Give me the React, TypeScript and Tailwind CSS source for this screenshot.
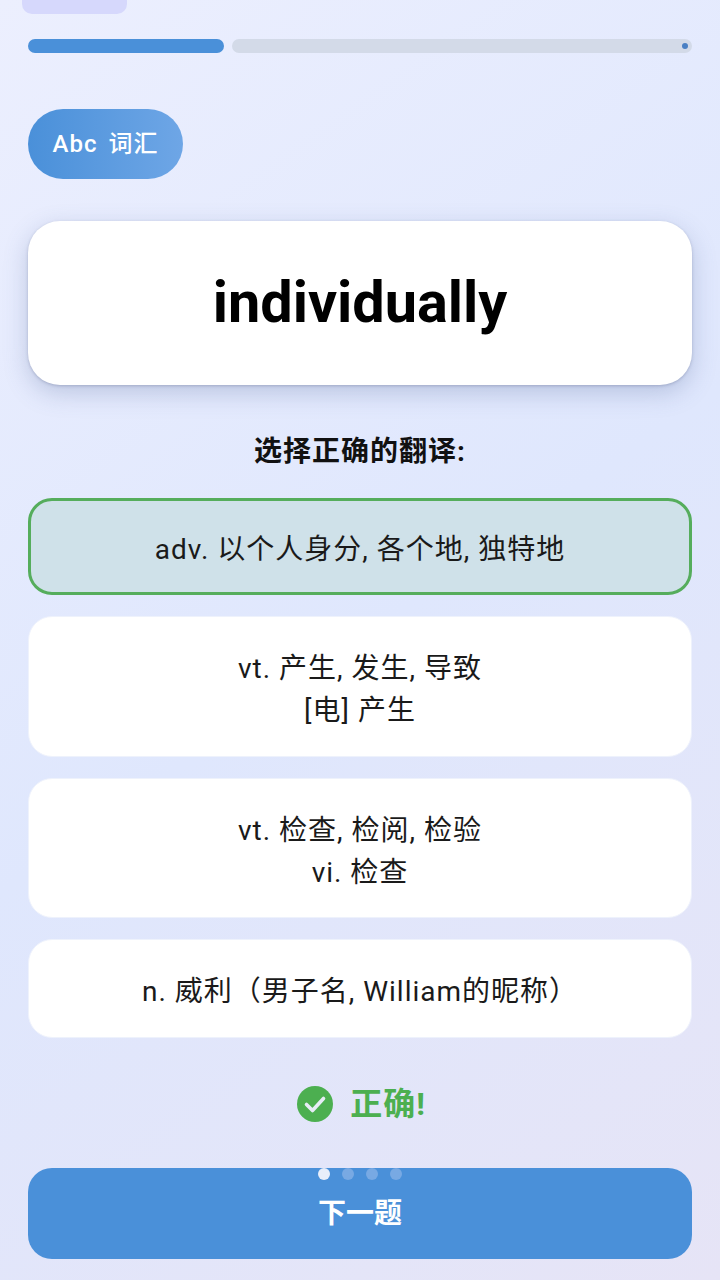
const options = [
  { lines: ["adv. 以个人身分, 各个地, 独特地"], correct: true },
  { lines: ["vt. 产生, 发生, 导致", "[电] 产生"] },
  { lines: ["vt. 检查, 检阅, 检验", "vi. 检查"] },
  { lines: ["n. 威利（男子名, William的昵称）"] },
];

const font = { fontFamily: '"Roboto", "Noto Sans CJK SC", sans-serif' };

export default function App() {
  return (
    <div
      style={font}
      className="relative w-[720px] h-[1280px] overflow-hidden px-[28px] bg-[linear-gradient(145deg,#eceffe_0%,#dfe7fd_50%,#e6e4f6_100%)]"
    >
      <div className="ml-[-6px] w-[105px] h-[14px] rounded-b-[10px] bg-[#d6d8fc]" />

      {/* progress */}
      <div className="mt-[25px] flex gap-[8px] h-[14px]">
        <div className="w-[196px] rounded-full bg-[#4a90d9]" />
        <div className="flex-1 rounded-full bg-[#d3dae8] flex items-center justify-end pr-[4px]">
          <div className="w-[6px] h-[6px] rounded-full bg-[#4a80c4]" />
        </div>
      </div>

      {/* chip */}
      <div className="mt-[56px] w-[155px] h-[70px] rounded-[35px] flex items-center justify-center gap-[11px] text-white text-[24px] font-medium tracking-[1px] bg-[linear-gradient(90deg,#4a90d9,#6ea6e6)]">
        <span>Abc</span>
        <span>词汇</span>
      </div>

      {/* word */}
      <div className="mt-[42px] h-[164px] rounded-[32px] bg-white flex items-center justify-center shadow-[0_1px_3px_rgba(80,90,130,0.3),0_8px_24px_rgba(80,100,150,0.28)]">
        <span className="text-[57.6px] font-bold text-black">individually</span>
      </div>

      <p className="mt-[47px] h-[40px] text-center text-[28px] leading-[40px] font-bold tracking-[1px] text-[#111]">选择正确的翻译:</p>

      <div className="mt-[26px] flex flex-col gap-[21px]">
        {options.map((o, i) => (
          <div
            key={i}
            className={
              o.correct
                ? "rounded-[24px] border-[3px] border-[#55ad5c] bg-[#cfe1e9] pt-[28px] pb-[21px] text-center text-[28px] leading-[42px] tracking-[1px] text-[#1a1a1a]"
                : "rounded-[24px] border border-[#eef2fc] bg-white pt-[31px] pb-[23.5px] text-center text-[28px] leading-[42px] tracking-[1px] text-[#1a1a1a]"
            }
          >
            {o.lines.map((l) => (
              <div key={l}>{l}</div>
            ))}
          </div>
        ))}
      </div>

      {/* result */}
      <div className="mt-[46px] h-[40px] pl-[3px] flex items-center justify-center gap-[17px]">
        <svg width="36" height="36" viewBox="0 0 36 36">
          <circle cx="18" cy="18" r="18" fill="#4caf50" />
          <path d="M9.5 18.5l6 6 11-12" fill="none" stroke="#e6ecf6" strokeWidth="3.6" strokeLinecap="round" strokeLinejoin="round" />
        </svg>
        <span className="text-[32px] font-bold tracking-[1px] text-[#4caf50]">正确!</span>
      </div>

      {/* next */}
      <button className="mt-[44px] block w-full h-[91px] pt-[2px] rounded-[24px] bg-[#4a90d9] text-white text-[28px] font-bold">
        下一题
      </button>

      <div className="absolute left-[318px] top-[1168px] flex gap-[12px]">
        {[0, 1, 2, 3].map((i) => (
          <div
            key={i}
            className={i === 0 ? "w-[12px] h-[12px] rounded-full bg-[#e8eefa]" : "w-[12px] h-[12px] rounded-full bg-[#78a9e3]"}
          />
        ))}
      </div>
    </div>
  );
}
